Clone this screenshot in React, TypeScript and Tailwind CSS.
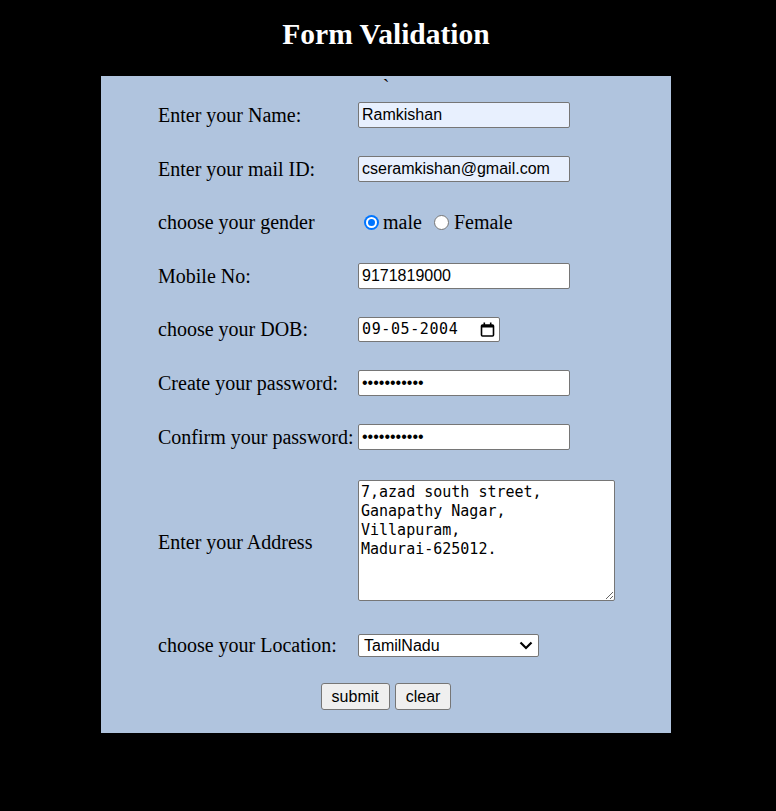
import type { ReactNode } from 'react'

function Row({ label, className, children }: { label: string; className: string; children: ReactNode }) {
  return (
    <div className={`flex items-center ${className}`}>
      <div className="w-[200px] shrink-0 text-[20px] leading-[23px]">{label}</div>
      {children}
    </div>
  )
}

function Radio({ checked }: { checked?: boolean }) {
  if (checked) {
    return (
      <span className="flex h-[15px] w-[15px] shrink-0 items-center justify-center rounded-full bg-[#0075ff]">
        <span className="flex h-[11px] w-[11px] items-center justify-center rounded-full bg-white">
          <span className="h-[7px] w-[7px] rounded-full bg-[#0075ff]" />
        </span>
      </span>
    )
  }
  return <span className="block h-[15px] w-[15px] shrink-0 rounded-full border border-[#767676] bg-white" />
}

const inputCls =
  "h-[26px] w-[212px] rounded-[2px] border border-[#767676] px-[3px] text-[16px] text-black font-['Liberation_Sans',Arial,sans-serif] outline-none"

export default function App() {
  return (
    <div className="min-h-screen bg-black pr-[4px] font-['Liberation_Serif','Times_New_Roman',serif] text-black">
      <h1 className="pt-[17px] text-center text-[29.5px] leading-[34px] font-bold text-white">Form Validation</h1>

      <div className="mx-auto mt-[25px] w-[570px] bg-[#b0c4de] pb-[23px]">
        <div className="h-[26px] text-center text-[20px] leading-[23px]">`</div>

        <div className="pl-[57px]">
          <Row label="Enter your Name:" className="h-[26px]">
            <input className={`${inputCls} bg-[#e8f0fe]`} defaultValue="Ramkishan" readOnly />
          </Row>

          <Row label="Enter your mail ID:" className="mt-[28px] h-[26px]">
            <input className={`${inputCls} bg-[#e8f0fe]`} defaultValue="cseramkishan@gmail.com" readOnly />
          </Row>

          <Row label="choose your gender" className="mt-[27px] h-[26px]">
            <div className="flex items-center pl-[6px] text-[20px] leading-[23px]">
              <Radio checked />
              <span className="ml-[4px]">male</span>
              <span className="ml-[12px] flex">
                <Radio />
              </span>
              <span className="ml-[5px]">Female</span>
            </div>
          </Row>

          <Row label="Mobile No:" className="mt-[28px] h-[26px]">
            <input className={`${inputCls} bg-white`} defaultValue="9171819000" readOnly />
          </Row>

          <Row label="choose your DOB:" className="mt-[28px] h-[25px]">
            <div className="flex h-[25px] w-[142px] items-center justify-between rounded-[2px] border border-[#767676] bg-white pr-[4px] pl-[3px]">
              <span className="text-[15px] tracking-[0.6px] font-['DejaVu_Sans_Mono',monospace]">09-05-2004</span>
              <svg width="15" height="15" viewBox="0 0 15 15" fill="none">
                <rect x="1.5" y="3" width="12" height="11" rx="1" stroke="black" strokeWidth="1.6" />
                <rect x="1.5" y="3" width="12" height="2.5" fill="black" />
                <rect x="3.5" y="0.5" width="1.6" height="3" fill="black" />
                <rect x="9.9" y="0.5" width="1.6" height="3" fill="black" />
              </svg>
            </div>
          </Row>

          <Row label="Create your password:" className="mt-[28px] h-[26px]">
            <input type="password" className={`${inputCls} bg-white`} defaultValue="ramkishan12" readOnly />
          </Row>

          <Row label="Confirm your password:" className="mt-[28px] h-[26px]">
            <input type="password" className={`${inputCls} bg-white`} defaultValue="ramkishan12" readOnly />
          </Row>

          <Row label="Enter your Address" className="mt-[30px] h-[125px]">
            <textarea
              className="h-[121px] w-[257px] self-start rounded-[2px] border border-[#767676] bg-white px-[2px] pt-[2px] text-[15px] leading-[19px] text-black font-['DejaVu_Sans_Mono',monospace] outline-none"
              defaultValue={'7,azad south street,\nGanapathy Nagar,\nVillapuram,\nMadurai-625012.'}
              readOnly
            />
          </Row>

          <Row label="choose your Location:" className="mt-[29px] h-[23px]">
            <div className="flex h-[23px] w-[181px] items-center justify-between rounded-[2px] border border-[#767676] bg-white pr-[5px] pl-[5px] text-[16px] font-['Liberation_Sans',Arial,sans-serif]">
              <span>TamilNadu</span>
              <svg width="14" height="9" viewBox="0 0 14 9" fill="none">
                <path d="M1.5 1.5 L7 7 L12.5 1.5" stroke="black" strokeWidth="2.2" />
              </svg>
            </div>
          </Row>
        </div>

        <div className="mt-[26px] flex justify-center gap-[5px] text-[16px] font-['Liberation_Sans',Arial,sans-serif]">
          <button className="h-[27px] rounded-[3px] border border-[#767676] bg-[#efefef] px-[10px]">submit</button>
          <button className="h-[27px] rounded-[3px] border border-[#767676] bg-[#efefef] px-[10px]">clear</button>
        </div>
      </div>
    </div>
  )
}
